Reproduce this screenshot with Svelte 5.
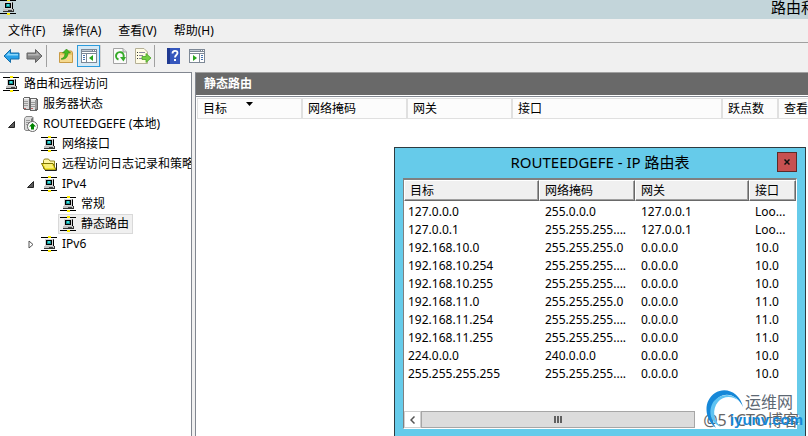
<script lang="ts">
  type TreeNode = {
    label: string;
    icon: "network" | "servers" | "server" | "folder";
    level: number;
    expanded?: boolean;
  };

  const menus = ["文件(F)", "操作(A)", "查看(V)", "帮助(H)"];

  const nodes: TreeNode[] = [
    { label: "路由和远程访问", icon: "network", level: 0 },
    { label: "服务器状态", icon: "servers", level: 1 },
    { label: "ROUTEEDGEFE (本地)", icon: "server", level: 1, expanded: true },
    { label: "网络接口", icon: "network", level: 2 },
    { label: "远程访问日志记录和策略", icon: "folder", level: 2 },
    { label: "IPv4", icon: "network", level: 2, expanded: true },
    { label: "常规", icon: "network", level: 3 },
    { label: "静态路由", icon: "network", level: 3 },
    { label: "IPv6", icon: "network", level: 2, expanded: false }
  ];

  const routes = [
    ["127.0.0.0", "255.0.0.0", "127.0.0.1", "Loo..."],
    ["127.0.0.1", "255.255.255....", "127.0.0.1", "Loo..."],
    ["192.168.10.0", "255.255.255.0", "0.0.0.0", "10.0"],
    ["192.168.10.254", "255.255.255....", "0.0.0.0", "10.0"],
    ["192.168.10.255", "255.255.255....", "0.0.0.0", "10.0"],
    ["192.168.11.0", "255.255.255.0", "0.0.0.0", "11.0"],
    ["192.168.11.254", "255.255.255....", "0.0.0.0", "11.0"],
    ["192.168.11.255", "255.255.255....", "0.0.0.0", "11.0"],
    ["224.0.0.0", "240.0.0.0", "0.0.0.0", "10.0"],
    ["255.255.255.255", "255.255.255....", "0.0.0.0", "10.0"]
  ];

  let selected = $state("静态路由");
  let dialogOpen = $state(true);
</script>

{#snippet network()}
  <svg width="16" height="16" viewBox="0 0 16 16" shape-rendering="crispEdges" aria-hidden="true">
    <rect x="0" y="1" width="16" height="1" fill="#000" />
    <rect x="0" y="14" width="16" height="1" fill="#000" />
    <rect x="7" y="0" width="3" height="2" fill="#ffee00" />
    <rect x="7" y="14" width="3" height="2" fill="#ffee00" />
    <rect x="4" y="3" width="9" height="8" fill="#555" />
    <rect x="4" y="3" width="8" height="7" fill="#d4d4d4" />
    <rect x="5" y="4" width="6" height="5" fill="#000" />
    <rect x="6" y="5" width="4" height="3" fill="#168d91" />
    <rect x="7" y="5" width="2" height="2" fill="#39e0dc" />
    <rect x="12" y="4" width="1" height="7" fill="#000" />
    <rect x="3" y="10" width="11" height="3" fill="#333" />
    <rect x="3" y="10" width="10" height="2" fill="#c0c0c0" />
    <rect x="8" y="11" width="4" height="1" fill="#444" />
  </svg>
{/snippet}

{#snippet servers()}
  <svg width="16" height="16" viewBox="0 0 16 16" shape-rendering="crispEdges" aria-hidden="true">
    <path d="M1 2h1V1h6v1h7v1h1v11h-1v1H8v-1H2v-1H1z" fill="#666" />
    <path d="M2 3h5v10H2z" fill="#d9d9d9" />
    <path d="M2 2h5v1H2zM9 3h5v1H9z" fill="#f4f4f4" />
    <path d="M9 4h4v10H9z" fill="#dedede" />
    <path d="M13 4h2v9h-2z" fill="#999" />
    <path d="M2 5h4v1H2zM2 7h4v1H2zM2 9h4v1H2zM9 6h4v1H9zM9 8h4v1H9zM9 10h4v1H9z" fill="#9b9b9b" />
    <path d="M2 12h2v1H2zM9 12h2v1H9z" fill="#b86060" />
  </svg>
{/snippet}

{#snippet server()}
  <svg width="16" height="16" viewBox="0 0 16 16" aria-hidden="true">
    <path d="M2.500 2.500l1.500-2h6l1 1v11l-1.500 2H4l-1.500-1z" fill="#dadada" stroke="#888" />
    <path d="M9 3l2-2v11H9z" fill="#777" />
    <path d="M4 4.500h4M4 6.500h4M4 8.500h3" stroke="#999" />
    <circle cx="10.500" cy="10.500" r="5" fill="#fff" stroke="#666" />
    <path d="M10.500 7L14 10.500h-2V13.500H9V10.500H7z" fill="#008500" />
  </svg>
{/snippet}

{#snippet folder()}
  <svg width="16" height="16" viewBox="0 0 16 16" aria-hidden="true">
    <path d="M2.500 12.500v-8l1-1.500h4l1.500 2h4.500v7.500z" fill="#fff7a0" stroke="#8f8420" />
    <path d="M0.500 7.500h11.500l3 6.500H4z" fill="#f4e431" stroke="#7c7200" />
    <path d="M3 9h8M4 11h8" stroke="#fffbc0" />
    <path d="M4 14.500h11.500V7" fill="none" stroke="#222" />
  </svg>
{/snippet}

{#snippet arrow(fill: string, light: string, stroke: string)}
  <svg width="17" height="16" viewBox="0 0 17 16" aria-hidden="true">
    <path d="M1 8l6.500-6.500V5H16v6H7.500v3.500z" {fill} {stroke} stroke-linejoin="round" />
    <path d="M3 7.500L6.500 4v2H15v1.500z" fill={light} />
  </svg>
{/snippet}

{#snippet panes(flip: boolean)}
  <svg width="16" height="14" viewBox="0 0 16 14" shape-rendering="crispEdges" aria-hidden="true">
    <path d="M0 0h16v14H0z" fill="#7d8896" />
    <path d="M1 3h14v1H1zM1 5h14v8H1z" fill="#fff" />
    <path d="M1 1h10v1H1z" fill="#c2cad4" />
    <path d="M12 1h1v1h-1zM14 1h1v1h-1z" fill="#fff" />
    {#if flip}
      <path d="M10 5h1v8h-1z" fill="#7d8896" />
      <path d="M12 6h2v1h-2zM12 8h2v1h-2zM12 10h2v1h-2z" fill="#4672ad" />
      <path d="M4 6l4 3-4 3z" fill="#29a51c" shape-rendering="auto" />
    {:else}
      <path d="M5 5h1v8H5z" fill="#7d8896" />
      <path d="M2 6h2v1H2zM2 8h2v1H2zM2 10h2v1H2z" fill="#4672ad" />
      <path d="M12 6L8 9l4 3z" fill="#29a51c" shape-rendering="auto" />
    {/if}
  </svg>
{/snippet}

<div class="console">
  <header class="title-bar">
    {@render network()}
    <span class="window-title">路由和远程访问</span>
  </header>

  <nav class="menu-bar">
    {#each menus as menu}
      <button>{menu}</button>
    {/each}
  </nav>

  <div class="toolbar">
    <button aria-label="后退">{@render arrow("#27a0e8", "#8bd7fb", "#176da8")}</button>
    <button class="forward" aria-label="前进">{@render arrow("#8a8a8a", "#b5b5b5", "#626262")}</button>
    <span class="divider"></span>
    <button aria-label="上一级">
      <svg width="16" height="16" viewBox="0 0 16 16" aria-hidden="true">
        <path d="M1.500 14.500v-10h5l1-1.500h6l1 1.500v10z" fill="#edc66a" stroke="#c89b45" />
        <path d="M2 7h12v7H2z" fill="#f5d98e" />
        <path d="M3 11c3-1 4-3 4-6H4.500L8.500 1l4 4H10c0 4-3 7-7 6z" fill="#45b91e" stroke="#2b8612" stroke-width="0.600" />
      </svg>
    </button>
    <button class="active" aria-label="显示/隐藏控制台树">{@render panes(false)}</button>
    <span class="divider faint"></span>
    <button aria-label="刷新">
      <svg width="14" height="16" viewBox="0 0 14 16" aria-hidden="true">
        <path d="M0.500 0.500h9.500l3.500 3.500v11.500H0.500z" fill="#fbfbfb" stroke="#a3a3a3" />
        <path d="M10 0.500V4h3.500" fill="#ddd" stroke="#a3a3a3" />
        <path d="M5.500 11.500A3.800 3.800 0 1 1 10.500 9" fill="none" stroke="#36aa29" stroke-width="2" />
        <path d="M7 9h6l-2.500 4.500z" fill="#36aa29" />
      </svg>
    </button>
    <button aria-label="导出列表">
      <svg width="16" height="16" viewBox="0 0 16 16" aria-hidden="true">
        <path d="M0.500 0.500h8.500l3.500 3.500v11.500H0.500z" fill="#fffce5" stroke="#b5b096" />
        <path d="M2 4.500h1M2 7.500h1M2 10.500h1" stroke="#333" />
        <path d="M4 4.500h6M4 7.500h4M4 10.500h4" stroke="#8a8aa0" />
        <path d="M7 8.500h4V5.500l5 4.500-5 4.500v-3H7z" fill="#74d044" stroke="#48a325" stroke-width="0.800" />
      </svg>
    </button>
    <span class="divider"></span>
    <button aria-label="帮助">
      <svg width="14" height="16" viewBox="0 0 14 16" aria-hidden="true">
        <path d="M0 0h13v16H0z" fill="#3657bd" />
        <path d="M0 0h3v16H0z" fill="#1f3991" />
        <path d="M5.500 5.500c0-3.500 5-3.500 5-0.500 0 2-2.500 2-2.500 4.500" fill="none" stroke="#fff" stroke-width="1.800" />
        <path d="M7 11h2v2H7z" fill="#fff" />
      </svg>
    </button>
    <button aria-label="显示/隐藏操作窗格">{@render panes(true)}</button>
  </div>

  <main class="workspace">
    <ul class="tree">
      {#each nodes as node}
        <li style:padding-left="{Math.max(node.level - 1, 0) * 19 + 1}px">
          {#if node.level > 0}
            <span class="twisty">
              {#if node.expanded === true}
                <svg width="7" height="7" viewBox="0 0 7 7" aria-hidden="true">
                  <path d="M6.500 0.500v6h-6z" fill="#595959" stroke="#262626" />
                </svg>
              {:else if node.expanded === false}
                <svg width="6" height="9" viewBox="0 0 6 9" aria-hidden="true">
                  <path d="M1 1l4 3.500L1 8z" fill="#fff" stroke="#555" />
                </svg>
              {/if}
            </span>
          {/if}
          <button class:selected={selected === node.label} onclick={() => (selected = node.label)}>
            {#if node.icon === "network"}
              {@render network()}
            {:else if node.icon === "servers"}
              {@render servers()}
            {:else if node.icon === "server"}
              {@render server()}
            {:else}
              {@render folder()}
            {/if}
            {node.label}
          </button>
        </li>
      {/each}
    </ul>

    <section class="detail">
      <h2>静态路由</h2>
      <table class="columns">
        <thead>
          <tr>
            <th class="w-target">
              目标
              <svg width="7" height="4" viewBox="0 0 7 4" aria-hidden="true"><path d="M0 0h7L3.500 4z" /></svg>
            </th>
            <th class="w-mask">网络掩码</th>
            <th class="w-mask">网关</th>
            <th class="w-interface">接口</th>
            <th class="w-metric">跃点数</th>
            <th>查看</th>
          </tr>
        </thead>
      </table>
    </section>
  </main>

  {#if dialogOpen}
    <div class="dialog" role="dialog" aria-labelledby="dialog-title">
      <div class="dialog-bar">
        <h1 id="dialog-title">ROUTEEDGEFE - IP 路由表</h1>
        <button class="close" aria-label="关闭" onclick={() => (dialogOpen = false)}>
          <svg width="6" height="6" viewBox="0 0 6 6" aria-hidden="true">
            <path d="M0.500 0.500l5 5M5.500 0.500l-5 5" stroke="#111" stroke-width="1.500" />
          </svg>
        </button>
      </div>

      <div class="list">
        <table class="routes">
          <thead>
            <tr>
              <th class="target">目标</th>
              <th class="mask">网络掩码</th>
              <th class="gateway">网关</th>
              <th>接口</th>
            </tr>
          </thead>
          <tbody>
            {#each routes as route}
              <tr>
                {#each route as cell}
                  <td>{cell}</td>
                {/each}
              </tr>
            {/each}
          </tbody>
        </table>

        <div class="scrollbar">
          <button class="scroll-left" aria-label="向左滚动">
            <svg width="5" height="8" viewBox="0 0 5 8" aria-hidden="true">
              <path d="M4.500 0.500L1 4l3.500 3.500" fill="none" stroke="#555" stroke-width="1.500" />
            </svg>
          </button>
          <div class="thumb"><i></i><i></i><i></i></div>
        </div>
      </div>
    </div>
  {/if}

  <div class="watermark">
    <span class="blog">@51CTO博客</span>
    <svg class="swirl" width="38" height="40" viewBox="0 0 38 40" aria-hidden="true">
      <path d="M37 18C34 4 20-3 9 4-3 12-2 30 10 39 3 28 4 17 12 9c9-7 20-2 25 9z" fill="#1688d8" />
      <path d="M33 12C26 6 17 7 12 13 6 20 7 31 15 38 3 33 2 20 8 12 15 4 27 4 33 12z" fill="#5fc3f2" />
    </svg>
    <span class="brand">运维网</span>
    <span class="domain">iyunv.com</span>
  </div>
</div>

<style>
  :global(body) {
    margin: 0;
  }

  .console {
    position: relative;
    display: flex;
    flex-direction: column;
    height: 100vh;
    overflow: hidden;
    background: #f0f0f0;
    color: #000;
    font: 12px/18px "Noto Sans", "Noto Sans CJK SC", sans-serif;
  }

  button {
    padding: 0;
    border: 0;
    background: none;
    color: inherit;
    font: inherit;
  }

  svg {
    flex-shrink: 0;
  }

  table {
    width: 100%;
    border-spacing: 0;
    table-layout: fixed;
  }

  th {
    overflow: hidden;
    font-weight: 400;
    text-align: left;
    white-space: nowrap;
  }

  .title-bar {
    display: flex;
    align-items: center;
    justify-content: space-between;
    flex-shrink: 0;
    box-sizing: border-box;
    height: 19px;
    padding-bottom: 6px;
    background: #c3d5da;
  }

  .window-title {
    width: 37px;
    overflow: hidden;
    font-size: 15px;
    white-space: nowrap;
  }

  .menu-bar {
    display: flex;
    gap: 17px;
    padding: 3px 8px 2px;
    border-bottom: 1px solid #a0a0a0;
  }

  .toolbar {
    display: flex;
    align-items: center;
    height: 25px;
    padding-bottom: 4px;
  }

  .toolbar button {
    display: flex;
    align-items: center;
    justify-content: center;
    box-sizing: border-box;
    width: 23px;
    height: 22px;
  }

  .toolbar .active {
    border: 1px solid #2c9bdc;
    background: #d5e9f6;
  }

  .forward svg {
    transform: scaleX(-1);
  }

  .divider {
    width: 1px;
    height: 22px;
    margin-right: 7px;
    background: #a0a0a0;
  }

  .faint {
    background: #d0d0d0;
  }

  .workspace {
    display: flex;
    flex: 1;
    gap: 3px;
    min-height: 0;
  }

  .tree {
    flex-shrink: 0;
    box-sizing: border-box;
    width: 192px;
    margin: 0;
    padding: 1px 0;
    overflow: hidden;
    border-top: 1px solid #828790;
    border-right: 1px solid #828790;
    background: #fff;
    list-style: none;
  }

  .tree li {
    display: flex;
    align-items: center;
    height: 20px;
  }

  .tree button {
    display: flex;
    align-items: center;
    gap: 5px;
    flex-shrink: 0;
    box-sizing: border-box;
    height: 20px;
    padding: 0 3px 0 1px;
    border: 1px solid transparent;
    white-space: nowrap;
  }

  .tree .selected {
    border-color: #d9d9d9;
    background: #f0f0f0;
  }

  .twisty {
    display: flex;
    align-items: center;
    justify-content: center;
    flex-shrink: 0;
    box-sizing: border-box;
    width: 19px;
    padding-left: 2px;
  }

  .detail {
    flex: 1;
    min-width: 0;
    border-top: 1px solid #a0a0a0;
    border-left: 1px solid #828790;
    background: #fff;
  }

  .detail h2 {
    margin: 0 0 1px;
    padding: 0 8px;
    background: #696969;
    color: #fff;
    font-size: 12px;
    line-height: 22px;
  }

  .columns {
    padding: 1px 0 0 1px;
    border-top: 1px solid #828790;
  }

  .columns th {
    box-sizing: border-box;
    height: 21px;
    padding: 0 0 0 5px;
    border: 1px solid #e0e0e0;
    border-width: 1px 2px 1px 0;
    background: #fcfcfc;
  }

  .columns th:first-child {
    border-left-width: 1px;
  }

  .columns th:last-child {
    border-right: 0;
  }

  .columns svg {
    margin-left: 16px;
    vertical-align: 7px;
  }

  .w-target {
    width: 106px;
  }

  .w-mask {
    width: 105px;
  }

  .w-interface {
    width: 210px;
  }

  .w-metric {
    width: 56px;
  }

  .dialog {
    position: absolute;
    top: 147px;
    right: 2px;
    bottom: 0;
    left: 394px;
    display: flex;
    flex-direction: column;
    padding: 0 8px 7px;
    border: 1px solid #2e3b40;
    border-bottom: 0;
    background: #66cbea;
  }

  .dialog-bar {
    display: grid;
    grid-template-columns: 20px 1fr 20px;
    align-items: center;
    height: 28px;
    padding-bottom: 2px;
  }

  .dialog-bar h1 {
    grid-column: 2;
    margin: 0;
    font-size: 15px;
    font-weight: 400;
    text-align: center;
    white-space: nowrap;
  }

  .close {
    display: flex;
    align-items: center;
    justify-content: center;
    box-sizing: border-box;
    height: 20px;
    border: 1px solid #5c2b29;
    background: #c75050;
  }

  .list {
    display: flex;
    flex: 1;
    flex-direction: column;
    justify-content: space-between;
    min-height: 0;
    border: 1px solid #fff;
    border-top: 2px solid #808080;
    border-left-color: #808080;
    background: #fff;
  }

  .routes th {
    box-sizing: border-box;
    height: 21px;
    padding: 0 5px;
    border: 1px solid #fff;
    border-right: 1px solid #696969;
    border-bottom: 1px solid #696969;
    background: #f0f0f0;
    box-shadow: inset -1px -1px #a0a0a0;
  }

  .routes .target {
    width: 135px;
  }

  .routes .mask {
    width: 96px;
  }

  .routes .gateway {
    width: 114px;
  }

  .routes td {
    height: 18px;
    padding: 0 0 0 6px;
    overflow: hidden;
    line-height: 18px;
    white-space: nowrap;
  }

  .routes td:first-child {
    padding-left: 4px;
  }

  .routes tbody::before {
    display: block;
    height: 2px;
    content: "";
  }

  .scrollbar {
    display: flex;
    flex-shrink: 0;
    height: 17px;
    background: #fff;
  }

  .scroll-left {
    display: flex;
    align-items: center;
    justify-content: center;
    box-sizing: border-box;
    width: 17px;
    border: 1px solid #d0d0d0;
  }

  .thumb {
    display: flex;
    align-items: center;
    justify-content: center;
    gap: 1px;
    box-sizing: border-box;
    width: 70%;
    border: 1px solid #a6a6a6;
    background: #dcdcdc;
  }

  .thumb i {
    width: 2px;
    height: 7px;
    background: #606060;
  }

  .watermark {
    position: absolute;
    right: 5px;
    bottom: 7px;
    width: 102px;
    height: 40px;
    pointer-events: none;
    white-space: nowrap;
  }

  .watermark span,
  .swirl {
    position: absolute;
  }

  .blog {
    right: 4px;
    bottom: 0;
    color: #666;
    font-size: 16px;
    text-shadow: 1px 1px #fff;
  }

  .swirl {
    top: 0;
    left: 5px;
  }

  .brand {
    top: 4px;
    left: 44px;
    color: #5d6873;
    font-size: 16px;
  }

  .domain {
    right: 0;
    bottom: 0;
    color: #1688d8;
    font: bold 15px/18px "Liberation Sans", sans-serif;
  }
</style>
